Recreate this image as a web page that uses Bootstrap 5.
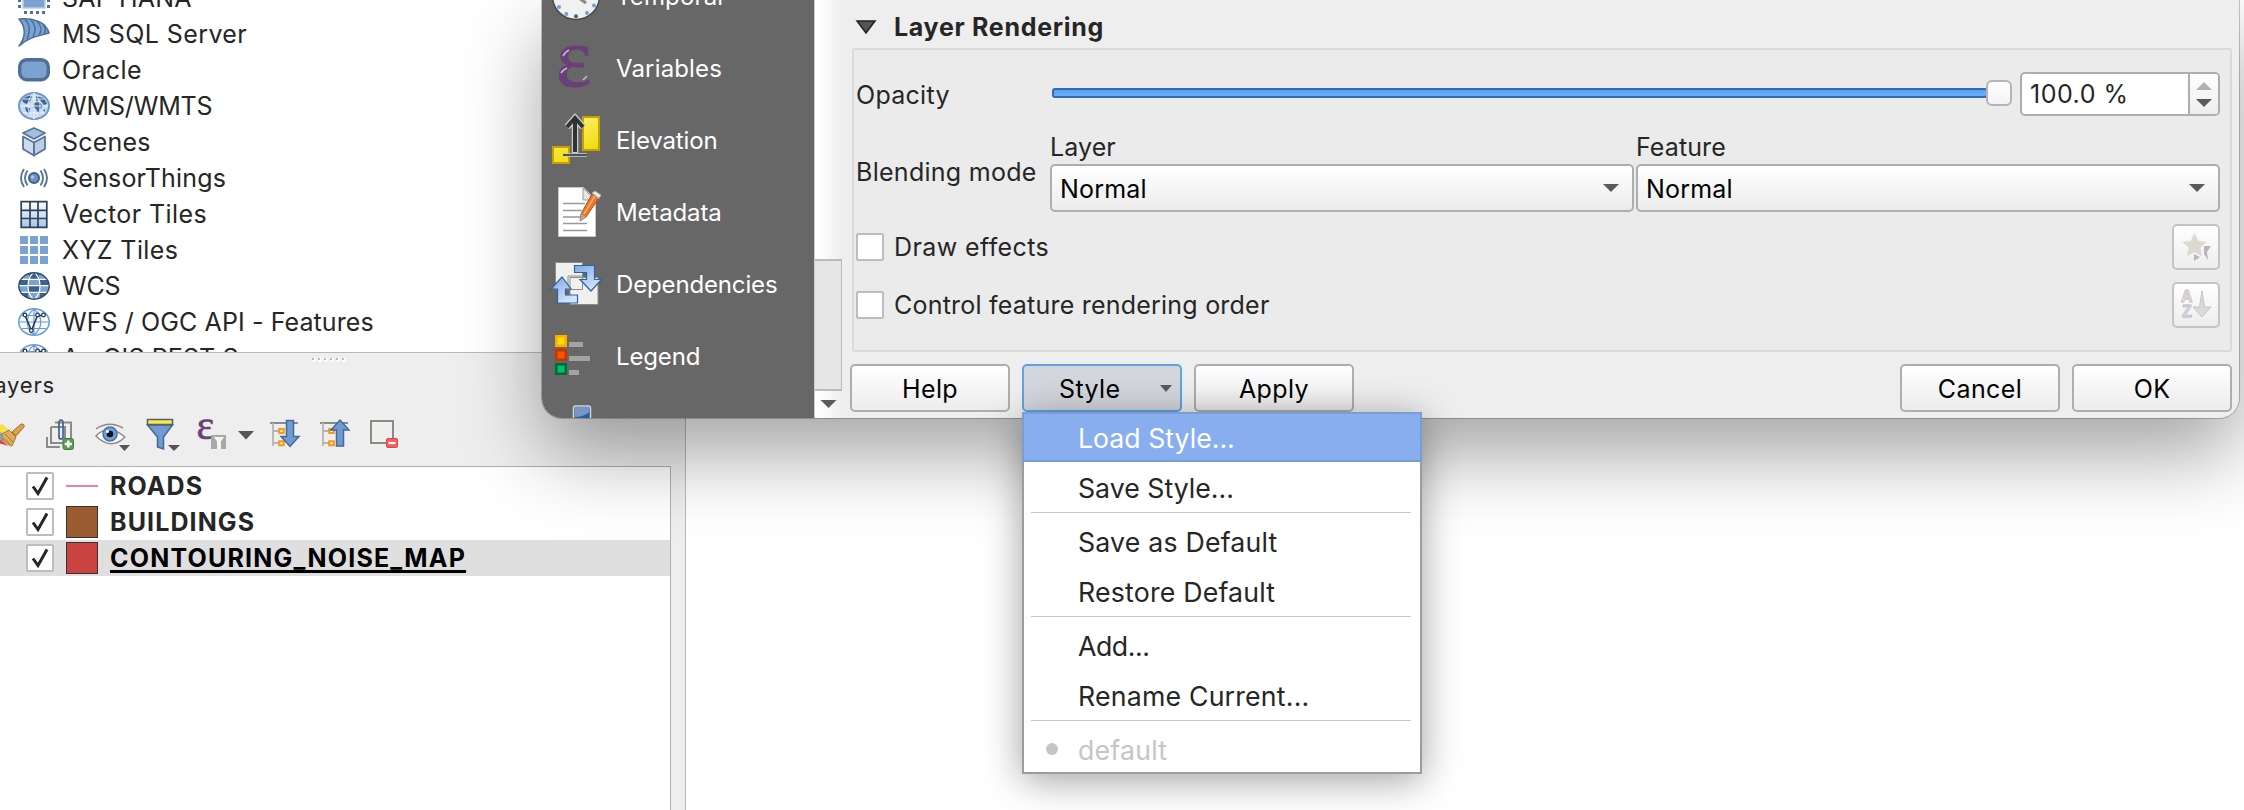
<!DOCTYPE html>
<html lang="en">
<head>
<meta charset="utf-8">
<title>Layer Properties</title>
<meta name="viewport" content="width=device-width, initial-scale=1">
<link href="https://cdn.jsdelivr.net/npm/bootstrap@5.3.0/dist/css/bootstrap.min.css" rel="stylesheet">
<style>
  body { font-family: Inter, "Liberation Sans", sans-serif; font-size: 25px; line-height: 36px; letter-spacing: .2px; color: #262626; background: #fff; height: 810px; }
  svg { display: block; flex: none; overflow: visible; }
  .desk { height: 810px; white-space: nowrap; }
  .dock { width: 686px; background: #eee; border-right: 1px solid #b9b9b9; }
  .browser-list { height: 353px; background: #fff; border-bottom: 1px solid #b9b9b9; }
  .browser-list ul { margin: -20px 0 0; }
  .browser-list li { height: 36px; padding-left: 18px; gap: 12px; }
  .browser-list .wide { letter-spacing: .4px; }
  .browser-list .mid { letter-spacing: .1px; }
  .browser-list .tight { letter-spacing: -.15px; }
  .grip { height: 12px; margin-left: 312px; padding-top: 5px; gap: 4px; }
  .grip i { width: 2px; height: 2px; background: #bbb; box-shadow: 1px 1px 0 1px #fafafa; }
  .dock-title { font-size: 22px; height: 44px; margin-left: -19px; padding-top: 2px; letter-spacing: .8px; }
  .tools { height: 44px; margin: 5px 0 8px -8px; }
  .tree { width: 671px; background: #fff; border: 1px solid #b0b0b0; border-width: 1px 1px 0 0; padding-top: 1px; }
  .tree-row { height: 36px; padding-left: 26px; font-weight: 700; letter-spacing: 1.1px; }
  .tree-row.sel { background: #dfdfdf; color: #000; }
  .tree-row.sel .nm { letter-spacing: 1.2px; text-decoration: underline; text-decoration-thickness: 3px; text-underline-offset: 3px; text-decoration-skip-ink: none; }
  .box { width: 28px; height: 28px; background: #fff; border: 2px solid #bdbdbd; border-radius: 2px; flex: none; }
  .sw { width: 32px; height: 32px; margin: 0 12px 0 12px; border: 1px solid #333; }
  .sw.line { height: 2px; border: 0; background: #ef7fae; }
  .brown { background: #9b5c31; } .red { background: #cb4341; }

  .dlg { left: 542px; top: 0; width: 1697px; height: 418px; background: #eee; border-radius: 0 0 20px 20px; box-shadow: 0 0 0 1px rgba(0,0,0,.22), 0 36px 80px rgba(0,0,0,.36); }
  .dlg-in { border-radius: 0 0 20px 20px; }
  .side { width: 272px; background: #676767; color: #fff; font-size: 24px; letter-spacing: -.15px; }
  .side ul { margin-top: -40px; }
  .side li { height: 72px; padding-left: 6px; gap: 12px; }
  .side .wide { letter-spacing: .15px; }
  .side span, .mi span, .ctl span { padding-top: 2px; }
  .sbar { width: 28px; background: linear-gradient(90deg,#fff,#fbfbfb 30%,#eee); border-left: 1px solid #ccc; }
  .sbar .thumb { margin-top: 259px; height: 132px; background: #e6e6e6; border: 1px solid #bbb; border-width: 2px 1px 2px 0; }
  .pane { padding: 0 8px 6px 8px; }
  .grp-title { height: 48px; padding: 6px 0 0 6px; font-weight: 700; gap: 18px; letter-spacing: .7px; }
  .grp { height: 304px; width: 1380px; margin-left: 2px; background: #ebebeb; border: 2px solid #dadada; border-radius: 3px; padding: 22px 10px 0 2px; }
  .lab { width: 194px; letter-spacing: .28px; }
  .lab.op { width: 196px; padding-top: 1px; }
  .lab.bm { padding-top: 26px; }
  .blend { padding-top: 12px; }
  .cap-line { position: relative; top: 1px; letter-spacing: .1px; }
  .track { height: 10px; background: linear-gradient(#5aa0ee,#6bb0fb); border: 2px solid #2f6cb0; border-radius: 3px; margin: -3px -2px 0 0; }
  .knob { width: 26px; height: 26px; background: linear-gradient(#fff,#f4f4f4); border: 2px solid #b4b4b4; border-radius: 6px; margin-right: 8px; margin-top: -3px; }
  .spin { width: 200px; height: 44px; background: #fff; border: 2px solid #aeaeae; border-radius: 5px; }
  .spin .arrows { width: 30px; border-left: 2px solid #aeaeae; background: linear-gradient(#fff,#ededed); }
  .spin .val { padding-left: 8px; letter-spacing: .5px; }
  .ctl { height: 48px; background: linear-gradient(#fff,#ececec); border: 2px solid #aeaeae; border-radius: 5px; color: #000; }
  .combo { width: 584px; padding: 0 13px 0 8px; }
  .feat { margin-left: 2px; }
  .tbtn { width: 48px; height: 46px; background: linear-gradient(#fff,#ededed); border: 2px solid #c4c4c4; border-radius: 5px; }
  .opt { gap: 10px; height: 46px; margin-top: 12px; letter-spacing: .4px; }
  .opt .long { letter-spacing: .22px; }
  .foot { padding-top: 12px; gap: 12px; }
  .pb { width: 160px; letter-spacing: .4px; }
  .pb.on { background: #d3d7dd; border-color: #5ea3e6; padding: 0 8px 0 35px; }
  .menu-pop { left: 1022px; top: 412px; width: 400px; height: 362px; background: #fff; font-size: 26.7px; box-shadow: inset 0 0 0 2px #9c9c9c, 0 6px 36px rgba(0,0,0,.38); z-index: 5; }
  .mi { height: 50px; padding-left: 56px; }
  .mi .dots { letter-spacing: 0; }
  .mi .add { letter-spacing: -.45px; }
  .mi.hot { background: #88aeef; color: #fff; box-shadow: inset 0 0 0 2px #7c9dd4; }
  .mi.off { color: #c5c5c5; padding-left: 24px; gap: 20px; }
  .mi.off i { width: 12px; height: 12px; border-radius: 50%; background: #c5c5c5; }
  .msep { height: 4px; border-top: 1px solid #c8c8c8; margin: 0 11px 0 9px; }
</style>
</head>
<body>
<div class="desk position-relative overflow-hidden d-flex">
  <aside class="dock h-100 flex-shrink-0">
    <div class="browser-list overflow-hidden">
      <ul class="list-unstyled">
        <li class="d-flex align-items-center"><svg width="32" height="32"><rect x="5" y="4" width="22" height="22" fill="#7ba2d1" stroke="#b9d0ea" stroke-width="1.5"/><g fill="#4f7196"><path d="M0 17h3v3H0zM0 23h3v3H0zM29 17h3v3h-3zM29 23h3v3h-3zM6 29h3v3H6zM12 29h3v3h-3zM18 29h3v3h-3zM24 29h3v3h-3z"/></g></svg><span>SAP HANA</span></li>
        <li class="d-flex align-items-center"><svg width="32" height="32" fill="#7ba2d1" stroke="#4a6e96" stroke-width="1.5" stroke-linejoin="round"><path d="M1 1C14 0 28 3 31 15 20 18 9 20 1 28 8 19 8 9 1 1Z"/><path d="M7 1.500C12 6 12 14 9 21.500M13 2C18 7 18 13 15 19M19 3.500C24 8 24 12 21 17.500M25 6.500C28 10 28 13 26 16" fill="none"/></svg><span class="wide">MS SQL Server</span></li>
        <li class="d-flex align-items-center"><svg width="32" height="32"><rect x="1.700" y="5.700" width="28.600" height="20" rx="7" fill="#7ba2d1" stroke="#4f6f94" stroke-width="3.400"/></svg><span class="wide">Oracle</span></li>
        <li class="d-flex align-items-center"><svg width="32" height="32"><ellipse cx="16" cy="16" rx="15" ry="13" fill="#c8daee" stroke="#6f98c9" stroke-width="2"/><path d="M4 10q5-5 10-4l-1 4-3 3-2 1-3-2zM7 17l5 1-1 6-3-3zM16 13l5-1 4 4-3 3-1 5-3-5-3-2zM18 6l8 2 3 6-3 1-4-5-4 1zM25 20l2-1 0 3z" fill="#3f6697"/><path d="M16 3v26M2 16h28M5 9h22M5 23h22M16 3c-8 7-8 19 0 26M16 3c8 7 8 19 0 26" fill="none" stroke="#eef4fb" stroke-width=".9"/></svg><span class="tight">WMS/WMTS</span></li>
        <li class="d-flex align-items-center"><svg width="32" height="32" fill="#b9cde6" stroke="#567599" stroke-width="1.800" stroke-linejoin="round"><path d="M16 2l11 5-11 6-11-6z" fill="#a3bfe0"/><path d="M5 10.500l11 6v13L5 23z" fill="#cddbed"/><path d="M27 10.500l-11 6v13L27 23z"/></svg><span>Scenes</span></li>
        <li class="d-flex align-items-center"><svg width="32" height="32" fill="none" stroke="#567599" stroke-width="1.900"><circle cx="16" cy="16" r="5" fill="#6a94c8" stroke="#3f5f86" stroke-width="2"/><circle cx="14.500" cy="15" r="1.800" fill="#a9c8ea" stroke="none"/><path d="M9.500 8.500q-5 7.500 0 15M22.500 8.500q5 7.500 0 15M6 7q-6 9 0 18M26 7q6 9 0 18"/></svg><span>SensorThings</span></li>
        <li class="d-flex align-items-center"><svg width="32" height="32"><defs><linearGradient id="vt" x2="0" y2="1"><stop stop-color="#fff"/><stop offset="1" stop-color="#a9c4ea"/></linearGradient></defs><path d="M3.200 3.700h25.600v25.600H3.200zM12 3.700v25.600M20 3.700v25.600M3.200 12.300h25.600M3.200 20.500h25.600" fill="url(#vt)" stroke="#2c4158" stroke-width="1.700"/></svg><span class="wide">Vector Tiles</span></li>
        <li class="d-flex align-items-center"><svg width="32" height="32" fill="#7aa3d3"><path d="M2 2h8v8H2zM12 2h8v8h-8zM22 2h8v8h-8zM2 12h8v8H2zM12 12h8v8h-8zM22 12h8v8h-8zM2 22h8v8H2zM12 22h8v8h-8zM22 22h8v8h-8z"/></svg><span class="wide">XYZ Tiles</span></li>
        <li class="d-flex align-items-center"><svg width="32" height="32"><clipPath id="gc"><ellipse cx="16" cy="16" rx="15" ry="13"/></clipPath><g clip-path="url(#gc)"><rect width="32" height="32" fill="#3b618f"/><path d="M0 16h10v6H0zM22 16h10v6H22zM10 22h12v8H10zM10 10h12v6H10zM4 3h7v6H4zM21 3h7v6h-7z" fill="#7ba2d1"/><path d="M0 9.300h32M0 15.700h32M0 22.300h32M16 2c-8 7-8 21 0 28M16 2c8 7 8 21 0 28" fill="none" stroke="#fff" stroke-width="1.200"/></g><ellipse cx="16" cy="16" rx="15.200" ry="13.200" fill="none" stroke="#2f4b6d" stroke-width="1.400"/></svg><span class="tight">WCS</span></li>
        <li class="d-flex align-items-center"><svg width="32" height="32" fill="none" stroke="#6a9bd6" stroke-width="1.200"><g id="wfs"><ellipse cx="16" cy="16" rx="15.200" ry="13.200" fill="#f6f9fd" stroke-width="1.500"/><path d="M16 3v26M1 16h30M4 9.500h24M4 22.500h24M16 3c-9 7-9 19 0 26M16 3c9 7 9 19 0 26"/><path d="M7 9.500l6.500 15 6-15h5.500" stroke="#1f3550" stroke-width="1.500"/><g fill="#fff" stroke="#1f3550"><circle cx="7" cy="9" r="1.800"/><circle cx="13.300" cy="24.500" r="1.800"/><circle cx="19.500" cy="9" r="1.800"/><circle cx="25.500" cy="9" r="1.800"/></g></g></svg><span class="mid">WFS / OGC API - Features</span></li>
        <li class="d-flex align-items-center"><svg width="32" height="32" fill="none" stroke="#6a9bd6" stroke-width="1.200"><use href="#wfs"/></svg><span class="mid">ArcGIS REST Servers</span></li>
      </ul>
    </div>
    <div class="grip d-flex"><i></i><i></i><i></i><i></i><i></i><i></i></div>
    <div class="dock-title">Layers</div>
    <div class="tools d-flex">
      <svg width="50" height="44" viewBox="-8 414 50 44"><path d="M-8 428l10-4 10 8-12 6z" fill="#f5e04a"/><path d="M-8 430l14 4-4 10-10-4z" fill="#79a6e0"/><path d="M-8 436l12 6 4 4-6-2-10-2z" fill="#e8403a"/><path d="M2 434l7-4 7 7-4 9q-3 0-10-7z" fill="#d9ad62" stroke="#a67a30"/><path d="M5 434l9 9M3 438l7 6" stroke="#a67a30"/><path d="M12 432l9-8q4 0 3 3l-8 9z" fill="#dca24a" stroke="#a06f25"/></svg>
      <svg width="50" height="44" viewBox="42 414 50 44" fill="none" stroke="#8c8c86" stroke-width="2"><path d="M47 437v10h13M51 427v16h14M51 427h14v16M55 422.500h16v17" /><path d="M59 438v-15q0-3 2-3t2 3v14q0 2-2 2t-2-2v-8" stroke="#3f618c" stroke-width="1.700"/><rect x="63" y="438.500" width="10.500" height="11" rx="2" fill="#5c9c5a" stroke="#3f7a3e" stroke-width="1"/><path d="M68.300 440.500v7M64.800 444h7" stroke="#fff" stroke-width="2.400"/></svg>
      <svg width="50" height="44" viewBox="92 414 50 44" fill="none"><path d="M96 436q12-13 29 1-14 14-29-1z" fill="#fff" stroke="#8c8c86" stroke-width="1.500"/><path d="M96 429q13-9 27-1" stroke="#8c8c86" stroke-width="1.500"/><circle cx="110" cy="434" r="7" fill="#6f9fd8" stroke="#4a72a5" stroke-width="1.500"/><circle cx="110" cy="434" r="3.300" fill="#111"/><circle cx="107.500" cy="431.500" r="1.500" fill="#fff"/><path d="M119 445h11l-5.500 6z" fill="#555"/></svg>
      <svg width="50" height="44" viewBox="142 414 50 44"><path d="M147.500 425h25l-9 12v12l-6-2v-10z" fill="#6f9bd0" stroke="#446a98" stroke-width="1.500"/><path d="M147.500 419.500h25v5h-25z" fill="#fde94b" stroke="#55606a" stroke-width="1.500"/><path d="M168 445h12l-6 6z" fill="#555"/></svg>
      <svg width="75" height="44" viewBox="192 414 75 44"><text x="196.500" y="438.500" font-family="Liberation Serif, serif" font-size="42" fill="#6b3f77" stroke="#6b3f77" stroke-width=".6">ε</text><path d="M211 435h15v14h-5v-8l3-4h-10l3 4v8h-6z" fill="#a8a8a4"/><path d="M214 437h10l-3 4v8h-4v-8z" fill="#f4f4f4"/><path d="M238 431h16l-8 8.500z" fill="#555"/></svg>
      <svg width="50" height="44" viewBox="267 414 50 44"><g id="tr"><path d="M270 423h28" stroke="#8c8c86" stroke-width="2"/><path d="M273 423v23M273 431h6M273 443h6" stroke="#b5b5b0" stroke-width="1.800" fill="none"/><path d="M279.200 429h4.600v4h-4.600zM279.200 441.200h4.600v4h-4.600z" fill="#fff3a0" stroke="#f59a1d" stroke-width="2"/></g><path d="M286.500 420.500h7v16h5.500l-9 10-9-10h5.500z" fill="#6f9bd0" stroke="#446a98" stroke-width="1.500"/></svg>
      <svg width="50" height="44" viewBox="317 414 50 44"><use href="#tr" x="50"/><path d="M336.500 446h7v-16h5.500l-9-10-9 10h5.500z" fill="#6f9bd0" stroke="#446a98" stroke-width="1.500"/></svg>
      <svg width="50" height="44" viewBox="367 414 50 44"><rect x="371" y="421" width="22" height="22" fill="#efefed" stroke="#8c8c86" stroke-width="2"/><rect x="386.500" y="438.500" width="11" height="9" rx="1.500" fill="#f0605f" stroke="#e04443"/><path d="M388.500 443h7" stroke="#fff" stroke-width="2.200"/></svg>
    </div>
    <div class="tree">
      <div class="tree-row d-flex align-items-center"><span class="box"><svg width="24" height="24"><path id="ck" d="M5 13l5 7L19 4" transform="translate(0 -.5)" fill="none" stroke="#262626" stroke-width="3"/></svg></span><span class="sw line"></span><span class="nm">ROADS</span></div>
      <div class="tree-row d-flex align-items-center"><span class="box"><svg width="24" height="24"><use href="#ck"/></svg></span><span class="sw brown"></span><span class="nm">BUILDINGS</span></div>
      <div class="tree-row sel d-flex align-items-center"><span class="box"><svg width="24" height="24"><use href="#ck"/></svg></span><span class="sw red"></span><span class="nm">CONTOURING_NOISE_MAP</span></div>
    </div>
    <div class="tree h-100 border-top-0"></div>
  </aside>
  <main class="flex-grow-1 bg-white"></main>

  <section class="dlg position-absolute">
    <div class="dlg-in d-flex h-100 overflow-hidden">
      <nav class="side flex-shrink-0">
        <ul class="list-unstyled mb-0">
          <li class="d-flex align-items-center"><svg width="56" height="72" viewBox="548 -40 56 72"><circle cx="576" cy="-4" r="23.500" fill="#f1f1ef" stroke="#4c4c4a" stroke-width="1.500"/><path d="M576-4l10 7" stroke="#888" stroke-width="3"/><g fill="#6f9fd6"><circle cx="559" cy="7" r="2"/><circle cx="566.300" cy="14" r="2"/><circle cx="576" cy="16.300" r="2" fill="#3f618c"/><circle cx="587" cy="13" r="2"/><circle cx="594" cy="5.500" r="2"/></g></svg><span class="wide">Temporal</span></li>
          <li class="d-flex align-items-center"><svg width="56" height="72" viewBox="548 32 56 72"><text x="556" y="86" font-family="Liberation Serif, serif" font-size="84" fill="#6b3f77" stroke="#6b3f77" stroke-width="1">ε</text><path d="M563 56q2-4 6-6M561 73q2-3 6-5M583 80l4-4" stroke="#cdb0d4" stroke-width="1.700" fill="none"/></svg><span class="wide">Variables</span></li>
          <li class="d-flex align-items-center"><svg width="56" height="72" viewBox="548 104 56 72"><defs><linearGradient id="yl" x2=".5" y2="1"><stop stop-color="#fff68a"/><stop offset="1" stop-color="#efda00"/></linearGradient></defs><g fill="url(#yl)" stroke="#c4a000" stroke-width="2"><path d="M583 117h16v33h-16zM553 147h16v16h-16z"/></g><path d="M563 155h24" stroke="#ccc" stroke-width="3.600"/><path d="M563 155h24" stroke="#2e3436" stroke-width="1.600"/><path d="M575 153v-34M567 127l8-9 8 9" fill="none" stroke="#ccc" stroke-width="6.500"/><path d="M575 152v-33M567 127l8-9 8 9" fill="none" stroke="#2e3436" stroke-width="4"/></svg><span>Elevation</span></li>
          <li class="d-flex align-items-center"><svg width="56" height="72" viewBox="548 176 56 72"><path d="M558.500 187.500h25l12 12v37h-37z" fill="#fff" stroke="#c9c9c9"/><path d="M583 188v12h12z" fill="#e6e6e6" stroke="#999"/><path d="M563 203.500h22M563 210.500h19M563 217h17M563 223.500h24M563 230.500h24" stroke="#999" stroke-width="1.500"/><path d="M592 194l7 4-13 19-6 4 1-7z" fill="#e8772e" stroke="#b5521a"/><path d="M595 196l-11 18" stroke="#ffad6b" stroke-width="1.500"/><path d="M592 193l3-2 6 4-2 3.500z" fill="#e8e8e8" stroke="#aaa"/><path d="M581 214l5 3-6 4z" fill="#aaa"/></svg><span>Metadata</span></li>
          <li class="d-flex align-items-center"><svg width="56" height="72" viewBox="548 248 56 72"><defs><linearGradient id="bl" x2=".6" y2="1"><stop stop-color="#7fa8e8"/><stop offset="1" stop-color="#d6e4fa"/></linearGradient></defs><path d="M555.500 262.500h27v27h-27zM570 277.500h28v27h-28z" fill="#f0f0ee" stroke="#8c8c86"/><path d="M568 290v-14h14" fill="none" stroke="#8c8c86"/><g fill="url(#bl)" stroke="#2d62a8" stroke-width="1.200"><path d="M574.500 265.500h20v14h7L591 291l-11-11.500h6.500V272.500h-12z"/><path d="M557.500 303h20v-8h-12v-6h5.500l-9-12-11 12h6.500z"/></g></svg><span>Dependencies</span></li>
          <li class="d-flex align-items-center"><svg width="56" height="72" viewBox="548 320 56 72"><g stroke-width="2.500"><path d="M556.300 336.300h9.500v9.500h-9.500z" fill="#ffdc00" stroke="#ffab00"/><path d="M556.300 350.300h9.500v9.500h-9.500z" fill="#ff5200" stroke="#c73500"/><path d="M556.300 364.300h9.500v9.500h-9.500z" fill="#00c060" stroke="#006b42"/></g><path d="M569 342h14v5h-14zM569 356h21v5h-21zM569 370h10v5h-10z" fill="#a3a3a3"/></svg><span>Legend</span></li>
          <li class="d-flex align-items-center"><svg width="56" height="72" viewBox="548 392 56 72"><rect x="573.500" y="406" width="17" height="20" rx="2" fill="#2a5da8" stroke="#d5d5cc" stroke-width="1.500"/><path d="M574.500 407h15v5q-6 5-15 5z" fill="#7796c6"/></svg></li>
        </ul>
      </nav>
      <div class="sbar flex-shrink-0"><div class="thumb"></div><svg width="28" height="26"><path d="M5.500 9h16l-8 8z" fill="#5a5a5a"/></svg></div>
      <div class="pane flex-grow-1 d-flex flex-column">
        <div class="grp-title d-flex align-items-center"><svg width="20" height="14"><path d="M1 1h18l-9 12z" fill="#555" stroke="#222" stroke-width="1.500"/></svg><span>Layer Rendering</span></div>
        <div class="grp">
          <div class="d-flex align-items-center"><div class="lab op">Opacity</div><div class="flex-grow-1 d-flex align-items-center"><div class="track flex-grow-1"></div><div class="knob"></div></div>
            <div class="spin d-flex overflow-hidden"><div class="val flex-grow-1 d-flex align-items-center">100.0 %</div><div class="arrows d-flex flex-column align-items-center justify-content-center"><svg width="16" height="26"><path d="M0 9h16l-8-8z" fill="#b0b0b0"/><path d="M0 18h16l-8 8z" fill="#5a5a5a"/></svg></div></div></div>
          <div class="blend d-flex"><div class="lab bm">Blending mode</div>
            <div><div class="cap-line">Layer</div><div class="ctl combo d-flex align-items-center justify-content-between"><span>Normal</span><svg width="16" height="8"><path d="M0 0h16l-8 8z" fill="#5a5a5a"/></svg></div></div>
            <div class="feat"><div class="cap-line">Feature</div><div class="ctl combo d-flex align-items-center justify-content-between"><span>Normal</span><svg width="16" height="8"><path d="M0 0h16l-8 8z" fill="#5a5a5a"/></svg></div></div></div>
          <div class="opt d-flex align-items-center"><span class="box"></span><span>Draw effects</span><span class="tbtn ms-auto d-flex"><svg width="44" height="42"><path d="M30 20h7l-4 6 1 8-4-6zM20 28l6 3-6 4z" fill="#b4b6b8"/><path d="M20.500 6l4 8.500 9.500 1-7 6.500 2 9.500-8.500-4.500-8.500 4.500 2-9.500-7-6.500 9.500-1z" fill="#dcdad0" stroke="#f6f6f6" stroke-width="1.200"/></svg></span></div>
          <div class="opt d-flex align-items-center"><span class="box"></span><span class="long">Control feature rendering order</span><span class="tbtn ms-auto d-flex"><svg width="44" height="42" font-family="Liberation Sans, sans-serif" font-weight="700" font-size="16" fill="#e6e0e0"><text x="7" y="18" stroke="#cbbcbc" stroke-width=".8">A</text><text x="8" y="33" stroke="#b4bcc8" stroke-width=".8">Z</text><path d="M28 7l2.500 16h6.500l-9 10-9-10h6.500z" fill="#d8dadc" stroke="#c3c7cc"/></svg></span></div>
        </div>
        <div class="foot d-flex">
          <div class="ctl pb d-flex align-items-center justify-content-center"><span>Help</span></div>
          <div class="ctl pb on d-flex align-items-center justify-content-between"><span>Style</span><svg width="12" height="7"><path d="M0 0h12l-6 7z" fill="#5a5a5a"/></svg></div>
          <div class="ctl pb d-flex align-items-center justify-content-center"><span>Apply</span></div>
          <div class="ctl pb ms-auto d-flex align-items-center justify-content-center"><span>Cancel</span></div>
          <div class="ctl pb d-flex align-items-center justify-content-center"><span>OK</span></div>
        </div>
      </div>
    </div>
  </section>

  <div class="menu-pop position-absolute">
    <div class="mi hot d-flex align-items-center"><span class="dots">Load Style...</span></div>
    <div class="mi d-flex align-items-center"><span class="dots">Save Style...</span></div>
    <div class="msep"></div>
    <div class="mi d-flex align-items-center"><span>Save as Default</span></div>
    <div class="mi d-flex align-items-center"><span>Restore Default</span></div>
    <div class="msep"></div>
    <div class="mi d-flex align-items-center"><span class="add">Add...</span></div>
    <div class="mi d-flex align-items-center"><span>Rename Current...</span></div>
    <div class="msep"></div>
    <div class="mi off d-flex align-items-center"><i></i><span>default</span></div>
  </div>
</div>
<script src="https://cdn.jsdelivr.net/npm/bootstrap@5.3.0/dist/js/bootstrap.bundle.min.js"></script>
</body>
</html>
